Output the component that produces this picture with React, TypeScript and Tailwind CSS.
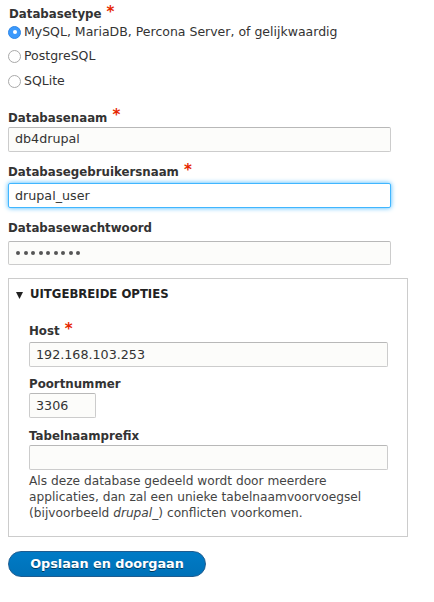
import React from "react";

const font = { fontFamily: '"DejaVu Sans", Verdana, sans-serif' };

function Req() {
  return <span className="text-[#e62600] ml-[5px] text-[15px] leading-none relative top-[-2px]">*</span>;
}

function Label({ children, req }: { children: React.ReactNode; req?: boolean }) {
  return (
    <div className="font-bold text-[11.8px] text-[#333] leading-[16px] h-[16px] flex items-center">
      <span>{children}</span>
      {req && <Req />}
    </div>
  );
}

function Input({ value, focus, w, pw, h }: { value: string; focus?: boolean; w?: string; pw?: boolean; h?: string }) {
  const base =
    "border rounded-[2px] px-[6px] flex items-center text-[12.7px] text-[#333] " + (h ?? "h-[25px]") + " ";
  const cls = focus
    ? base + "bg-white border-[#40b6ff] shadow-[0_0_5px_#40b6ff]"
    : base + "bg-[#fcfcfa] border-[#ccc] border-t-[#b8b8b8]";
  return (
    <div className={cls + " " + (w ?? "w-full")}>
      {pw ? (
        <span className="flex gap-[3.5px] pl-[1px]">
          {Array.from({ length: 9 }).map((_, i) => (
            <span key={i} className="w-[4px] h-[4px] rounded-full bg-[#555]" />
          ))}
        </span>
      ) : (
        value
      )}
    </div>
  );
}

function Radio({ checked, label }: { checked?: boolean; label: string }) {
  return (
    <div className="flex items-center h-[24.5px]">
      {checked ? (
        <span className="w-[13px] h-[13px] rounded-full bg-[#3b99fc] flex items-center justify-center mr-[3px] border border-[#2f87e8]">
          <span className="w-[4px] h-[4px] rounded-full bg-white" />
        </span>
      ) : (
        <span className="w-[13px] h-[13px] rounded-full bg-white border border-[#a9a9a9] mr-[3px]" />
      )}
      <span className="text-[12.5px] text-[#333]">{label}</span>
    </div>
  );
}

export default function App() {
  return (
    <div className="w-[434px] h-[602px] bg-white px-[8px] pt-[6px]" style={font}>
      <div className="pl-[1px]">
        <Label req>Databasetype</Label>
      </div>
      <div className="mt-[-2px]">
        <Radio checked label="MySQL, MariaDB, Percona Server, of gelijkwaardig" />
        <Radio label="PostgreSQL" />
        <Radio label="SQLite" />
      </div>

      <div className="w-[383px] mt-[16px]">
        <Label req>Databasenaam</Label>
        <div className="mt-[1px]">
          <Input value="db4drupal" />
        </div>
        <div className="mt-[12.5px]">
          <Label req>Databasegebruikersnaam</Label>
        </div>
        <div className="mt-[3px]">
          <Input value="drupal_user" focus />
        </div>
        <div className="mt-[12px]">
          <Label>Databasewachtwoord</Label>
        </div>
        <div className="mt-[5px]">
          <Input value="" pw h="h-[24px]" />
        </div>
      </div>

      <div className="mt-[13px] w-[400px] border border-[#ccc] pb-[15px]">
        <div className="flex items-center pl-[7px] h-[32px]">
          <svg width="7" height="7" viewBox="0 0 7 7" className="mr-[7px]">
            <path d="M0 0 H7 L3.5 7 Z" fill="#222" />
          </svg>
          <span className="font-bold text-[11.7px] text-[#222] uppercase">Uitgebreide opties</span>
        </div>
        <div className="pl-[20px] pr-[19px] mt-[12px]">
          <Label req>Host</Label>
          <div className="mt-[3px]">
            <Input value="192.168.103.253" />
          </div>
          <div className="mt-[9px]">
            <Label>Poortnummer</Label>
          </div>
          <div className="mt-[1px]">
            <Input value="3306" w="w-[67px]" />
          </div>
          <div className="mt-[10px]">
            <Label>Tabelnaamprefix</Label>
          </div>
          <div className="mt-[1px]">
            <Input value="" />
          </div>
          <p className="mt-[3px] text-[12.2px] leading-[16px] text-[#444]">
            Als deze database gedeeld wordt door meerdere applicaties, dan zal een unieke tabelnaamvoorvoegsel
            (bijvoorbeeld <span className="italic">drupal_</span>) conflicten voorkomen.
          </p>
        </div>
      </div>

      <button className="mt-[14px] h-[26px] w-[198px] rounded-full border border-[#1e5c90] bg-gradient-to-b from-[#007bc6] to-[#0071b8] text-white font-bold text-[12.8px] [text-shadow:0_1px_rgba(0,0,0,0.5)] flex items-center justify-center">
        Opslaan en doorgaan
      </button>
    </div>
  );
}
